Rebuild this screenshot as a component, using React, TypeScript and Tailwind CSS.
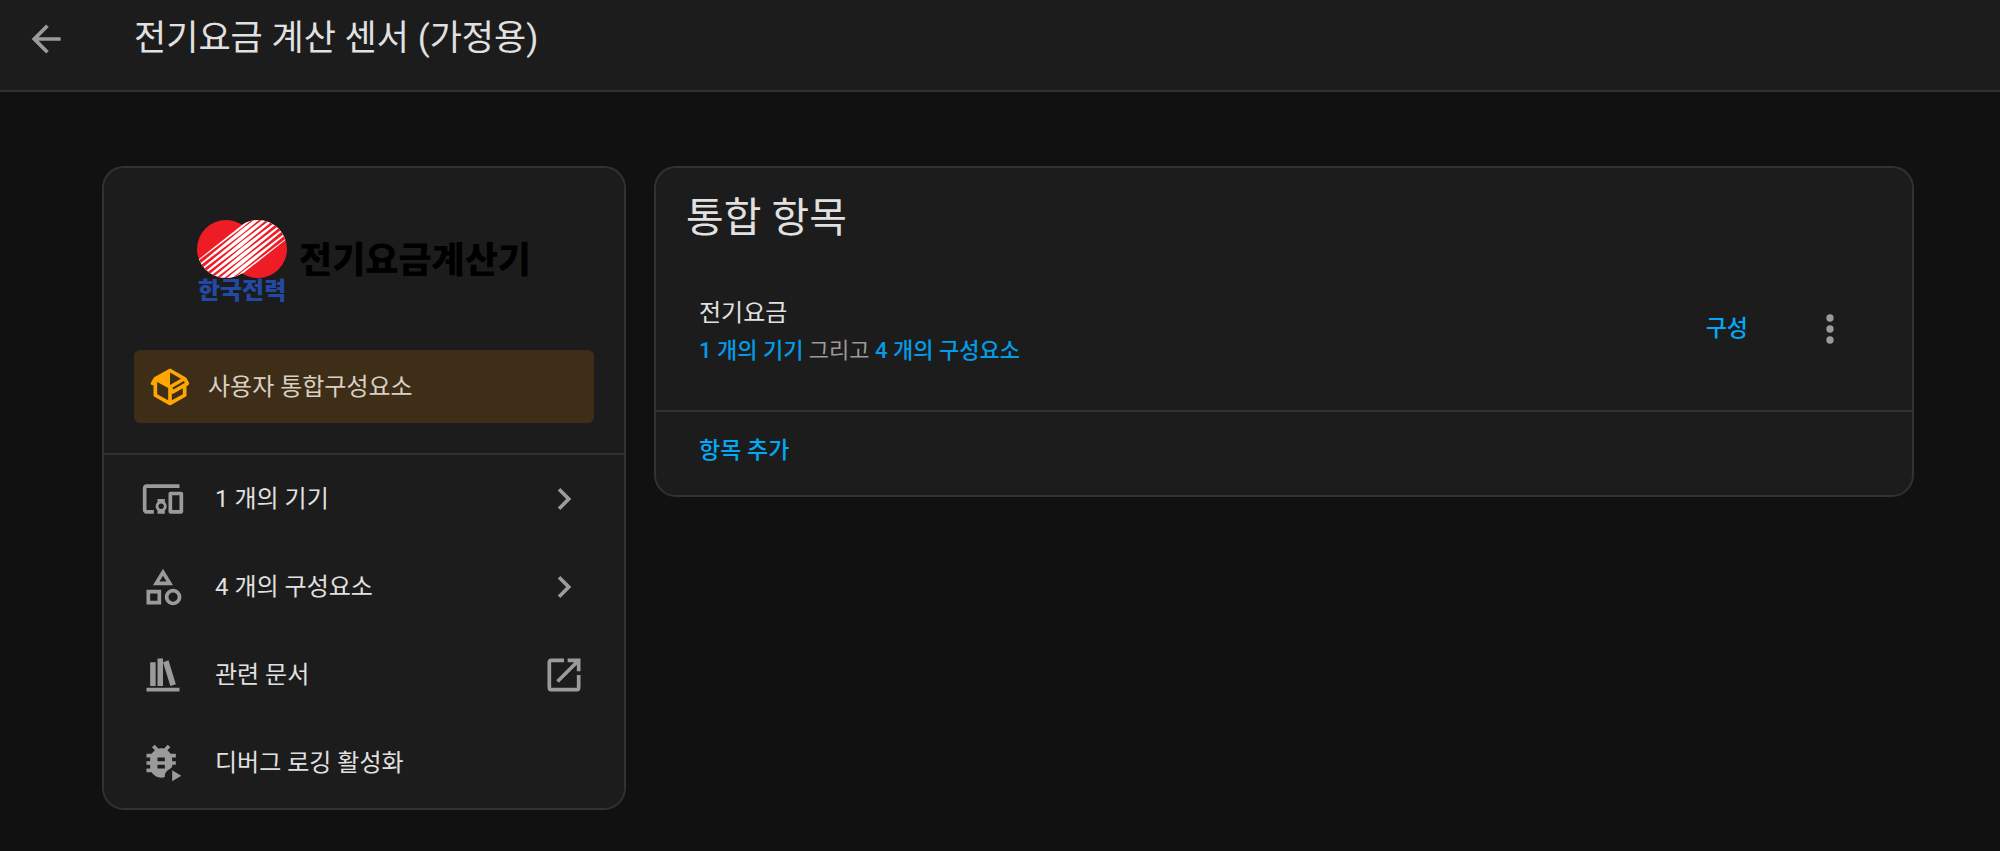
import type { ReactNode } from "react";

const paths = {
  arrowLeft:
    "M20,11V13H8L13.5,18.5L12.08,19.92L4.16,12L12.08,4.08L13.5,5.5L8,11H20Z",
  devices:
    "M3 6H21V4H3C1.9 4 1 4.9 1 6V18C1 19.1 1.9 20 3 20H7V18H3V6M13 12H9V13.78C8.39 14.33 8 15.11 8 16C8 16.89 8.39 17.67 9 18.22V20H13V18.22C13.61 17.67 14 16.88 14 16S13.61 14.33 13 13.78V12M11 17.5C10.17 17.5 9.5 16.83 9.5 16S10.17 14.5 11 14.5 12.5 15.17 12.5 16 11.83 17.5 11 17.5M22 8H16C15.5 8 15 8.5 15 9V19C15 19.5 15.5 20 16 20H22C22.5 20 23 19.5 23 19V9C23 8.5 22.5 8 22 8M21 18H17V10H21V18Z",
  shape:
    "M11,13.5V21.5H3V13.5H11M9,15.5H5V19.5H9V15.5M12,2L17.5,11H6.5L12,2M12,5.86L10.08,9H13.92L12,5.86M17.5,13C20,13 22,15 22,17.5C22,20 20,22 17.5,22C15,22 13,20 13,17.5C13,15 15,13 17.5,13M17.5,15A2.5,2.5 0 0,0 15,17.5A2.5,2.5 0 0,0 17.5,20A2.5,2.5 0 0,0 20,17.5A2.5,2.5 0 0,0 17.5,15Z",
  bookshelf: "M9 3V18H12V3H9M12 5L16 18L19 17L15 4L12 5M5 5V18H8V5H5M3 19V21H21V19H3Z",
  bugPlay:
    "M19 7H16.19C15.74 6.2 15.12 5.5 14.37 5L16 3.41L14.59 2L12.42 4.17C11.96 4.06 11.5 4 11 4S10.05 4.06 9.59 4.17L7.41 2L6 3.41L7.62 5C6.87 5.5 6.26 6.21 5.81 7H3V9H5.09C5.03 9.33 5 9.66 5 10V11H3V13H5V14C5 14.34 5.03 14.67 5.09 15H3V17H5.81C7.26 19.5 10.28 20.61 13 19.65V19C13 17.5 14 16.2 15.5 15.4L17 14.2V13H19V11H17V10C17 9.66 16.97 9.33 16.91 9H19V7M13 9V11H9V9H13M9 15V13H13V15H9M17 16V22L22 19L17 16Z",
  package:
    "M2,10.96C1.5,10.68 1.35,10.07 1.63,9.59L3.13,7C3.24,6.8 3.41,6.66 3.6,6.58L11.43,2.18C11.59,2.06 11.79,2 12,2C12.21,2 12.41,2.06 12.57,2.18L20.47,6.62C20.66,6.72 20.82,6.88 20.91,7.08L22.36,9.6C22.64,10.08 22.47,10.69 22,10.96L21,11.54V16.5C21,16.88 20.79,17.21 20.47,17.38L12.57,21.82C12.41,21.94 12.21,22 12,22C11.79,22 11.59,21.94 11.43,21.82L3.53,17.38C3.21,17.21 3,16.88 3,16.5V10.96C2.7,11.13 2.32,11.14 2,10.96M12,4.15V4.15L12,10.85V10.85L17.96,7.5L12,4.15M5,15.91L11,19.29V12.58L5,9.21V15.91M19,15.91V12.69L14,15.59C13.67,15.77 13.3,15.76 13,15.6V19.29L19,15.91M13.85,13.36L20.13,9.73L19.55,8.72L13.27,12.35L13.85,13.36Z",
  chevronRight: "M8.59,16.58L13.17,12L8.59,7.41L10,6L16,12L10,18L8.59,16.58Z",
  openInNew:
    "M14,3V5H17.59L7.76,14.83L9.17,16.24L19,6.41V10H21V3M19,19H5V5H12V3H5C3.89,3 3,3.9 3,5V19A2,2 0 0,0 5,21H19A2,2 0 0,0 21,19V12H19V19Z",
  dotsVertical:
    "M12,16A2,2 0 0,1 14,18A2,2 0 0,1 12,20A2,2 0 0,1 10,18A2,2 0 0,1 12,16M12,10A2,2 0 0,1 14,12A2,2 0 0,1 12,14A2,2 0 0,1 10,12A2,2 0 0,1 12,10M12,4A2,2 0 0,1 14,6A2,2 0 0,1 12,8A2,2 0 0,1 10,6A2,2 0 0,1 12,4Z",
};

type IconName = keyof typeof paths;

interface MenuItem {
  icon: IconName;
  label: string;
  trailing?: IconName;
}

const menuItems: MenuItem[] = [
  { icon: "devices", label: "1 개의 기기", trailing: "chevronRight" },
  { icon: "shape", label: "4 개의 구성요소", trailing: "chevronRight" },
  { icon: "bookshelf", label: "관련 문서", trailing: "openInNew" },
  { icon: "bugPlay", label: "디버그 로깅 활성화" },
];

function Icon({ name, className = "size-11" }: { name: IconName; className?: string }) {
  return (
    <svg viewBox="0 0 24 24" className={`shrink-0 ${className}`} fill="currentColor" aria-hidden="true">
      <path d={paths[name]} />
    </svg>
  );
}

function Card({ children, className = "" }: { children: ReactNode; className?: string }) {
  return (
    <section className={`rounded-[22px] border-2 border-[#323232] bg-[#1c1c1c] ${className}`}>
      {children}
    </section>
  );
}

// Red stripes of the logo: thin in the middle, wider towards both ends
const stripes = [0, 1, 2, 3, 4, 5, 6, 7].map((i) => {
  const c = 44 + i * 6.1;
  const y = (x: number) => c - 0.79 * x;
  return `M-5 ${y(-5) - 2.4}L45 ${y(45) - 0.6}L95 ${y(95) - 2.4}V${y(95) + 2.4}L45 ${y(45) + 0.6}L-5 ${y(-5) + 2.4}Z`;
});

function BrandLogo() {
  return (
    <div className="flex items-center justify-center gap-3">
      <div className="flex flex-col items-center gap-[2px]">
        <svg viewBox="0 0 90 58" className="h-[58px] w-[90px]" aria-hidden="true">
          <defs>
            <clipPath id="discs">
              <circle cx="29" cy="29" r="29" />
              <circle cx="61" cy="29" r="29" />
            </clipPath>
          </defs>
          <g clipPath="url(#discs)">
            <rect width="90" height="58" fill="#ee1c25" />
            <path d="M-5 44.6L60 -6.8H95V14.7L30 66H-5Z" fill="#fff" />
            <path d={stripes.join("")} fill="#ee1c25" />
          </g>
        </svg>
        <span className="text-[24px] leading-[22px] font-black text-[#2349a5]">한국전력</span>
      </div>
      <span className="text-[36px] leading-none font-black text-black">전기요금계산기</span>
    </div>
  );
}

function IntegrationCard() {
  return (
    <Card className="w-[524px] shrink-0">
      <div className="px-[30px] pt-[52px] pb-[30px]">
        <BrandLogo />
        <div className="mt-[48px] flex h-[73px] items-center gap-4 rounded-md bg-[#3e2e18] px-[14px] text-[24px] text-[#d8d0c4]">
          <Icon name="package" className="size-11 text-[#ffa600]" />
          사용자 통합구성요소
        </div>
      </div>
      <nav className="border-t-2 border-[#323232] pb-px">
        {menuItems.map((item) => (
          <a
            key={item.label}
            href="#"
            className="flex h-[88px] items-center pr-[38px] pl-[37px] text-[24px] text-[#e1e1e1]"
          >
            <Icon name={item.icon} className="size-11 text-[#9b9b9b]" />
            <span className="ml-[30px] flex-1">{item.label}</span>
            {item.trailing && <Icon name={item.trailing} className="size-11 text-[#9b9b9b]" />}
          </a>
        ))}
      </nav>
    </Card>
  );
}

function EntriesCard() {
  return (
    <Card className="min-w-0 flex-1">
      <h2 className="px-[30px] pt-5 text-[41px] leading-[60px] text-[#e1e1e1]">통합 항목</h2>
      <div className="flex items-start justify-between pt-[46px] pr-[60px] pb-10 pl-[43px]">
        <div>
          <div className="text-[24px] leading-[38px] text-[#e1e1e1]">전기요금</div>
          <div className="text-[22px] leading-[38px] text-[#9b9b9b]">
            <a href="#" className="font-medium text-[#039be5]">1 개의 기기</a> 그리고{" "}
            <a href="#" className="font-medium text-[#039be5]">4 개의 구성요소</a>
          </div>
        </div>
        <div className="flex h-[70px] items-center gap-[60px]">
          <button className="text-[23px] font-medium text-[#03a9f4]">구성</button>
          <button aria-label="메뉴" className="text-[#9b9b9b]">
            <Icon name="dotsVertical" className="size-11" />
          </button>
        </div>
      </div>
      <div className="flex h-[85px] items-center border-t-2 border-[#323232] pb-1 pl-[43px]">
        <button className="text-[23px] font-medium text-[#03a9f4]">항목 추가</button>
      </div>
    </Card>
  );
}

export default function App() {
  return (
    <div className="min-h-screen bg-[#111111] font-[Roboto,'Noto_Sans_CJK_KR',sans-serif]">
      <header className="flex h-[92px] items-center border-b-2 border-[#323232] bg-[#1c1c1c] px-6 pb-3">
        <a href="#" aria-label="뒤로" className="text-[#9b9b9b]">
          <Icon name="arrowLeft" />
        </a>
        <h1 className="ml-[66px] text-[35px] text-[#e1e1e1]">전기요금 계산 센서 (가정용)</h1>
      </header>
      <main className="flex items-start gap-7 py-[74px] pr-[86px] pl-[102px]">
        <IntegrationCard />
        <EntriesCard />
      </main>
    </div>
  );
}
